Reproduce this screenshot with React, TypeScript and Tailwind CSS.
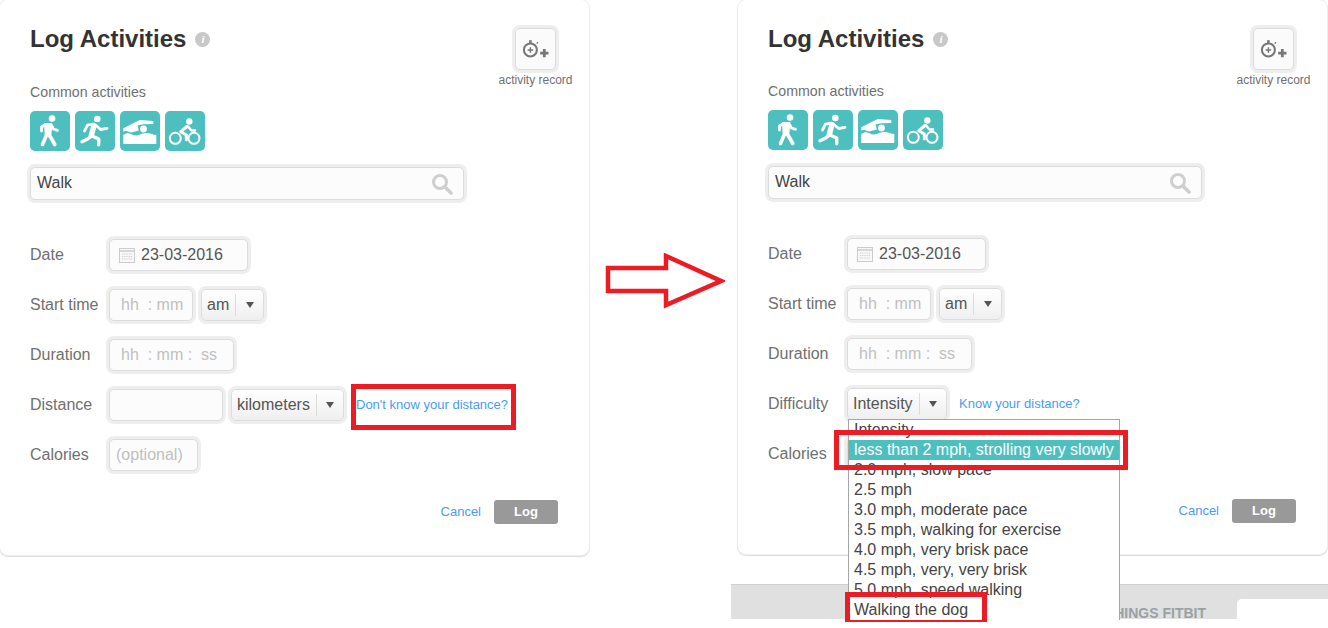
import React from 'react';

const ring = 'shadow-[0_0_0_3px_#eeeeee] border border-[#dcdcdc] rounded-[5px]';

const intensityOptions = [
    'Intensity',
    'less than 2 mph, strolling very slowly',
    '2.0 mph, slow pace',
    '2.5 mph',
    '3.0 mph, moderate pace',
    '3.5 mph, walking for exercise',
    '4.0 mph, very brisk pace',
    '4.5 mph, very, very brisk',
    '5.0 mph, speed walking',
    'Walking the dog',
];

const Tile: React.FC<{ children: React.ReactNode }> = ({ children }) => (
    <div className="w-10 h-10 rounded-[5px] bg-[#4dbfbf]">
        <svg viewBox="0 0 40 40" className="w-10 h-10" fill="none" stroke="white" strokeLinecap="round" strokeLinejoin="round">
            {children}
        </svg>
    </div>
);

const ActivityIcons = () => (
    <div className="flex gap-[5px] mt-[11px]">
        {/* walk */}
        <Tile>
            <circle cx="22" cy="7.5" r="3.3" fill="white" stroke="none" />
            <path d="M15 13 L21.5 13 L20.5 23.5 L15.5 23.5 Z" fill="white" strokeWidth="1.8" />
            <path d="M14.5 14 L11.5 16 L11.5 20" strokeWidth="2.8" />
            <path d="M21.5 14.5 L23.5 18 L27.5 19.3" strokeWidth="2.8" />
            <path d="M17 23 L12.5 33.5" strokeWidth="3.6" />
            <path d="M19 23.5 L24.8 33.5" strokeWidth="3.6" />
        </Tile>
        {/* run */}
        <Tile>
            <circle cx="22.3" cy="8" r="3.3" fill="white" stroke="none" />
            <path d="M19 14.5 L16.3 24.5" strokeWidth="5.4" />
            <path d="M18 13.2 L12.5 14.2 L9.5 20" strokeWidth="2.8" />
            <path d="M21.3 14.7 L25.7 18.5 L32 17.3" strokeWidth="2.8" />
            <path d="M15.7 25.5 L13 27.7 L7 30.8" strokeWidth="3.4" />
            <path d="M16.5 24.7 L23.7 28 L23.7 33.7" strokeWidth="3.4" />
        </Tile>
        {/* swim */}
        <Tile>
            <path d="M3.3 17.3 L19.7 9 L33.3 10 L33.3 13 L23 13.3 L17.5 14.5 L18.8 19.5 L11.3 21.5 L5.5 19.8 L3.3 20.7 Z" fill="white" stroke="none" />
            <circle cx="23.5" cy="18" r="3.4" fill="white" stroke="none" />
            <path d="M3.3 24 C6 22 8.5 21.8 11 23 C14 24.8 17 25 20 23.6 C24 21.8 28 21.6 31 22.8 C33 23.6 34.8 24 36.3 24 L36.3 33 L3.3 33 Z" fill="white" stroke="none" />
        </Tile>
        {/* bike */}
        <Tile>
            <circle cx="24.3" cy="10.5" r="3.2" fill="white" stroke="none" />
            <circle cx="10.3" cy="27.3" r="5.5" strokeWidth="2" />
            <circle cx="29" cy="27.3" r="5.5" strokeWidth="2" />
            <path d="M22 15.5 L15.8 20.7 L21.3 24 L21.3 28.7" strokeWidth="3" />
            <path d="M23 15.5 L26.5 19.5 L30 19.5" strokeWidth="2.6" />
        </Tile>
    </div>
);

const TimerIcon = () => (
    <svg viewBox="0 0 42 42" className="w-[40px] h-[40px]" fill="none" stroke="#777777">
        <circle cx="15.5" cy="22" r="7" strokeWidth="2.2" />
        <path d="M15.5 11.5 L15.5 14.5" strokeWidth="2.8" />
        <path d="M22.5 14 L23.5 15" strokeWidth="2" />
        <path d="M15.5 19 L15.5 25 M12.5 22 L18.5 22" strokeWidth="1.6" />
        <path d="M30.5 21 L30.5 30 M26 25.5 L35 25.5" strokeWidth="3" />
    </svg>
);

const CalendarIcon = () => (
    <svg viewBox="0 0 16 16" className="w-4 h-4 mr-[6px]" fill="none" stroke="#cccccc">
        <rect x="0.5" y="1.5" width="15" height="14" fill="#f8f8f8" />
        <path d="M0.5 4 L15.5 4" strokeWidth="1.5" />
        <path d="M3 7 L13 7 M3 9.5 L13 9.5 M3 12 L13 12" strokeDasharray="1.2 1" strokeWidth="1.2" />
    </svg>
);

const SearchField = () => (
    <div className={`${ring} mt-4 h-[33px] w-[434px] bg-[#fcfcfc] flex items-center justify-between pl-[6px] pr-[10px] pb-[2px] text-[16px] text-[#444]`}>
        <span>Walk</span>
        <svg viewBox="0 0 22 22" className="w-[22px] h-[22px] mt-[2px]" fill="none" stroke="#cfcfcf" strokeLinecap="round">
            <circle cx="9" cy="9" r="6.5" strokeWidth="3" />
            <path d="M14 14 L20 20" strokeWidth="3.6" />
        </svg>
    </div>
);

const Caret = () => (
    <span className="w-0 h-0 border-x-[4px] border-x-transparent border-t-[6px] border-t-[#555] mx-auto" />
);

const SelectBox: React.FC<{ label: string; width: string; children?: React.ReactNode }> = ({ label, width, children }) => (
    <div className={`${ring} ${width} relative h-[32px] flex items-center bg-gradient-to-b from-white to-[#efefef] text-[16px] text-[#555]`}>
        <span className="pl-[5px] pr-[6px]">{label}</span>
        <span className="h-[22px] border-l border-[#dcdcdc]" />
        <Caret />
        {children}
    </div>
);

const Row: React.FC<{ label: string; children: React.ReactNode }> = ({ label, children }) => (
    <div className="flex items-center h-[32px] mb-[18px]">
        <span className="w-[79px] text-[16px] text-[#707070]">{label}</span>
        {children}
    </div>
);

const TimeBox: React.FC<{ width: string; seconds?: boolean }> = ({ width, seconds }) => (
    <div className={`${ring} ${width} h-[32px] bg-[#fcfcfc] flex items-center pl-[11px] text-[16px] text-[#c0c0c0] whitespace-pre`}>
        {seconds ? 'hh  : mm :  ss' : 'hh  : mm'}
    </div>
);

const LogPanel: React.FC<{ compact?: boolean; distanceRow: React.ReactNode }> = ({ compact, distanceRow }) => (
    <div className="w-[589px] h-fit pl-[30px] pt-[25px] pb-[31px] bg-white rounded-[8px] shadow-[0_0_0_1px_#eeeeee,0_1px_1px_1px_#dddddd]">
        <div className="flex justify-between pr-[16px]">
            <div>
                <h1 className="flex items-center text-[24px] leading-[28px] font-bold text-[#333]">
                    Log Activities
                    <span className="ml-[9px] mt-[1px] w-[15px] h-[15px] rounded-full bg-[#c8c8c8] text-white text-[11px] leading-[15px] italic text-center font-['Liberation_Serif',serif]">i</span>
                </h1>
                <p className={`${compact ? 'mt-[30px]' : 'mt-[31px]'} text-[14.2px] leading-4 text-[#707070]`}>Common activities</p>
                <ActivityIcons />
            </div>
            <div className="w-[75px] mt-[3px] flex flex-col items-center">
                <div className={`${ring} w-[41px] h-[42px] bg-[#fbfbfb] flex items-center justify-center`}>
                    <TimerIcon />
                </div>
                <span className="mt-[3px] text-[12px] leading-[14px] text-[#707070] whitespace-nowrap">activity record</span>
            </div>
        </div>
        <SearchField />
        <div className="mt-[39px]">
            <Row label="Date">
                <div className={`${ring} w-[139px] h-[32px] bg-[#fcfcfc] flex items-center pl-[9px] text-[16px] text-[#555]`}>
                    <CalendarIcon />
                    23-03-2016
                </div>
            </Row>
            <Row label="Start time">
                <TimeBox width="w-[84px]" />
                <div className="ml-2">
                    <SelectBox label="am" width="w-[63px]" />
                </div>
            </Row>
            <Row label="Duration">
                <TimeBox width="w-[125px]" seconds />
            </Row>
            {distanceRow}
            <Row label="Calories">
                <div className={`${ring} w-[89px] h-[32px] bg-[#fcfcfc] flex items-center pl-[6px] text-[16px] text-[#c0c0c0]`}>(optional)</div>
            </Row>
        </div>
        <div className="mt-[29px] w-[528px] h-6 flex items-center justify-end text-[13px]">
            <a className="text-[#4a9bf5]">Cancel</a>
            <button className="ml-[13px] w-16 h-6 rounded-[3px] bg-[#999] text-white font-bold">Log</button>
        </div>
    </div>
);

const App: React.FC = () => {
    return (
        <div className="relative w-[1328px] h-[628px] overflow-hidden bg-white flex font-['Liberation_Sans',sans-serif]">
            <LogPanel
                distanceRow={
                    <Row label="Distance">
                        <div className={`${ring} w-[114px] h-[32px] bg-[#fcfcfc]`} />
                        <div className="ml-2">
                            <SelectBox label="kilometers" width="w-[113px]" />
                        </div>
                        <a className="ml-3 text-[13px] text-[#4a9bf5] whitespace-nowrap">Don't know your distance?</a>
                    </Row>
                }
            />

            {/* arrow between the two states */}
            <div className="w-[142px] shrink-0 pl-[16px] pt-[253px]">
                <svg viewBox="0 0 120 56" className="w-[120px] h-[56px]" fill="white" stroke="#ed1c24" strokeWidth="4.5">
                    <path d="M3 15 L61 15 L61 3 L116 28 L61 52 L61 38 L3 38 Z" />
                </svg>
            </div>

            <div className="w-[597px] shrink-0">
                <div className="pl-[7px]">
                    <LogPanel
                        compact
                        distanceRow={
                            <Row label="Difficulty">
                                <SelectBox label="Intensity" width="w-[100px]">
                                    <div className="absolute z-10 left-0 top-[30px] w-[272px] h-[201px] overflow-hidden bg-white border border-[#a6a6a6] border-b-0 text-[16px] leading-5 text-[#444]">
                                        {intensityOptions.map((option, index) => (
                                            <div
                                                key={option}
                                                className={index === 1 ? 'pl-[5px] h-5 bg-[#4dbfbf] text-white whitespace-nowrap' : 'pl-[5px] h-5 whitespace-nowrap'}
                                            >
                                                {option}
                                            </div>
                                        ))}
                                    </div>
                                </SelectBox>
                                <a className="ml-3 text-[13px] text-[#4a9bf5] whitespace-nowrap">Know your distance?</a>
                            </Row>
                        }
                    />
                </div>
                {/* page footer peeking out under the panel */}
                <div className="mt-[30px] h-[35px] bg-[#e0e0e0] border-t border-[#cfcfcf] flex items-end justify-end">
                    <span className="text-[14px] leading-[11px] font-bold text-[#9aa1a5]">THINGS FITBIT</span>
                    <div className="ml-[31px] w-[91px] h-5 bg-white rounded-tl-[5px]" />
                </div>
            </div>

            {/* red annotation boxes */}
            <div className="absolute left-[351px] top-[384px] w-[165px] h-[46px] border-[5px] border-[#ed1c24]" />
            <div className="absolute z-20 left-[834px] top-[430px] w-[294px] h-[40px] border-[5px] border-[#ed1c24]" />
            <div className="absolute z-20 left-[845px] top-[592px] w-[142px] h-[30px] border-[5px] border-b-[2px] border-[#ed1c24]" />
        </div>
    );
};

export default App;
